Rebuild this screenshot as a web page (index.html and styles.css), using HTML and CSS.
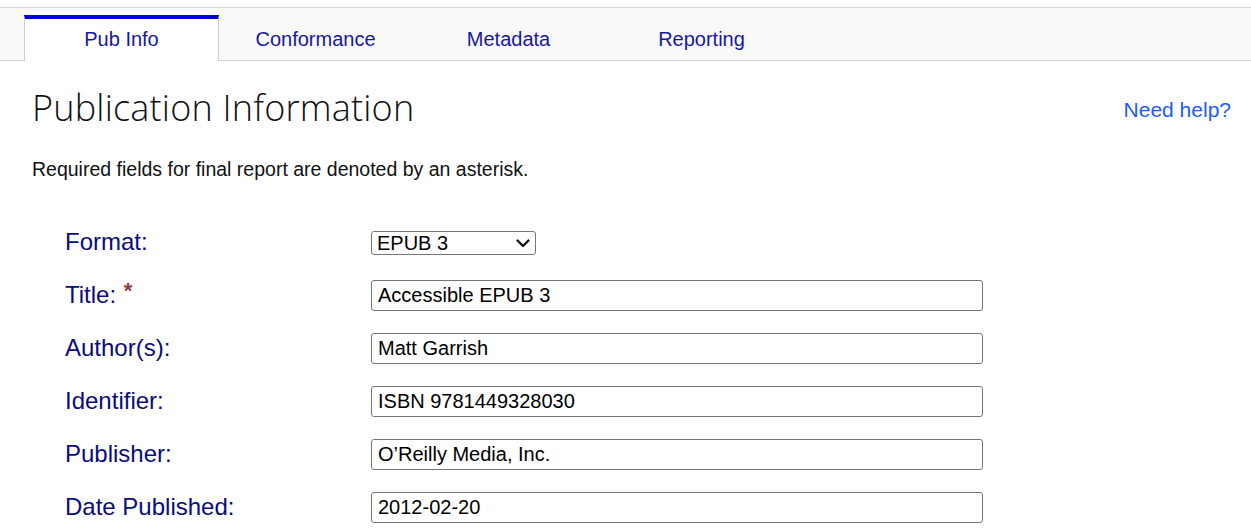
FILE: index.html
```html
<!DOCTYPE html>
<html lang="en">
<head>
<meta charset="utf-8">
<title>Publication Information</title>
<link rel="stylesheet" href="styles.css">
</head>
<body>
<nav class="tabs">
  <ul class="tab-list">
    <li class="tab active"><a href="#">Pub Info</a></li>
    <li class="tab"><a href="#">Conformance</a></li>
    <li class="tab"><a href="#">Metadata</a></li>
    <li class="tab"><a href="#">Reporting</a></li>
  </ul>
</nav>
<main class="content">
  <div class="head-row">
    <h1 class="title">Publication Information</h1>
    <a class="help" href="#">Need help?</a>
  </div>
  <p class="note">Required fields for final report are denoted by an asterisk.</p>
  <form class="form">
    <label class="label" for="format">Format:</label>
    <div class="control">
      <div class="select-wrap">
        <select id="format" class="select"><option>EPUB 3</option></select>
        <svg class="chev" width="14" height="9" viewBox="0 0 14 9" aria-hidden="true"><path d="M1.5 1.5 L7 7 L12.5 1.5" fill="none" stroke="#111" stroke-width="2.4" stroke-linecap="round" stroke-linejoin="round"/></svg>
      </div>
    </div>
    <label class="label" for="title">Title: <span class="req">*</span></label>
    <div class="control"><input id="title" class="input" type="text" value="Accessible EPUB 3"></div>
    <label class="label" for="author">Author(s):</label>
    <div class="control"><input id="author" class="input" type="text" value="Matt Garrish"></div>
    <label class="label" for="ident">Identifier:</label>
    <div class="control"><input id="ident" class="input" type="text" value="ISBN 9781449328030"></div>
    <label class="label" for="pub">Publisher:</label>
    <div class="control"><input id="pub" class="input" type="text" value="O’Reilly Media, Inc."></div>
    <label class="label" for="date">Date Published:</label>
    <div class="control"><input id="date" class="input" type="text" value="2012-02-20"></div>
  </form>
</main>
</body>
</html>
```
FILE: styles.css
```css
html, body {
  margin: 0;
  padding: 0;
  background: #ffffff;
  font-family: "Liberation Sans", Arial, sans-serif;
  overflow: hidden;
}

.tabs {
  margin-top: 7px;
  border-top: 1px solid #d6d6d6;
  border-bottom: 1px solid #d6d6d6;
  background: #f9f9f9;
  height: 52px;
}

.tab-list {
  list-style: none;
  margin: 0;
  padding: 7px 0 0 24px;
  display: flex;
  height: 45px;
}

.tab {
  width: 193px;
  height: 45px;
  box-sizing: border-box;
  display: flex;
  align-items: center;
  justify-content: center;
  border-top: 4px solid transparent;
  padding-bottom: 0;
}

.tab a {
  color: #1717a3;
  text-decoration: none;
  font-size: 20px;
}

.tab.active {
  width: 195px;
  background: #ffffff;
  border-top: 4px solid #0000dd;
  border-left: 1px solid #d0d0d0;
  border-right: 1px solid #d0d0d0;
  height: 46px;
  margin-bottom: -1px;
  padding-bottom: 1px;
}

.content {
  padding: 0 20px 0 32px;
}

.head-row {
  display: flex;
  justify-content: space-between;
  align-items: center;
  margin-top: 25px;
  height: 44px;
}

.title {
  margin: 0;
  font-family: "Open Sans", "Lato", sans-serif;
  font-weight: 300;
  font-size: 36px;
  line-height: 44px;
  color: #111111;
  letter-spacing: 0.2px;
}

.help {
  color: #1a5cff;
  text-decoration: none;
  font-size: 21px;
  margin-top: 4px;
}

.note {
  margin: 28px 0 0 0;
  font-size: 19.5px;
  line-height: 22px;
  color: #111111;
}

.form {
  margin: 47px 0 0 33px;
  display: grid;
  grid-template-columns: 306px 612px;
  grid-auto-rows: 31px;
  row-gap: 22px;
  align-items: center;
}

.label {
  color: #0b0b80;
  font-size: 24px;
  line-height: 29px;
  padding-bottom: 2px;
}

.req {
  color: #8e3b3b;
  font-size: 22px;
  font-weight: bold;
  line-height: 0;
  vertical-align: 5px;
  margin-left: 1px;
}

.control {
  display: flex;
  align-items: center;
}

.select-wrap {
  position: relative;
  width: 165px;
  height: 24px;
  margin-top: 1px;
}

.select {
  -webkit-appearance: none;
  appearance: none;
  width: 165px;
  height: 24px;
  box-sizing: border-box;
  font-family: "Liberation Sans", Arial, sans-serif;
  font-size: 20px;
  line-height: 22px;
  color: #000;
  border: 1px solid #767676;
  border-radius: 3px;
  background: #fff;
  padding: 0 24px 0 5px;
  margin: 0;
}

.chev {
  position: absolute;
  right: 6px;
  top: 8px;
  pointer-events: none;
}

.input {
  width: 612px;
  height: 31px;
  box-sizing: border-box;
  font-family: "Liberation Sans", Arial, sans-serif;
  font-size: 20px;
  color: #000;
  border: 1px solid #767676;
  border-radius: 3px;
  padding: 0 6px;
  background: #fff;
}
```
